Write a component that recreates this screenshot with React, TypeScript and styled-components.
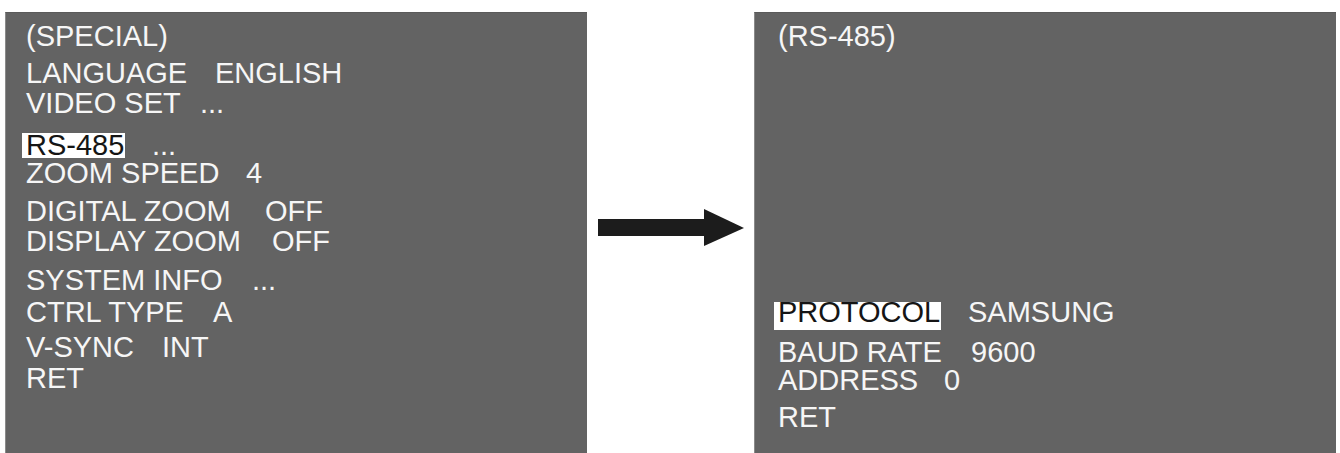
import styled, { createGlobalStyle } from 'styled-components'

const Global = createGlobalStyle`
  html, body {
    margin: 0;
    padding: 0;
    background: #fff;
  }
  body {
    font-family: "Liberation Sans", Arial, sans-serif;
  }
`

const Page = styled.div`
  display: flex;
  height: 453px;
  padding: 12px 4px 0 5px;
  box-sizing: border-box;
  overflow: hidden;
`

const Screen = styled.section<{ $padLeft: number }>`
  width: 582px;
  height: 441px;
  flex-shrink: 0;
  box-sizing: border-box;
  padding: 9px 0 0 ${p => p.$padLeft}px;
  background: #636363;
  border-left: 1px solid #8a8a8a;
  border-top: 1px solid #5a5a5a;
  color: #f6f6f6;
  font-size: 29px;
  display: flex;
  flex-direction: column;
`

const Row = styled.div<{ $mt?: number }>`
  display: flex;
  height: 28px;
  line-height: 28px;
  margin-top: ${p => p.$mt ?? 0}px;
  white-space: nowrap;
`

const Label = styled.span<{ $w?: number }>`
  flex-shrink: 0;
  width: ${p => (p.$w ? `${p.$w}px` : 'auto')};
`

const Value = styled.span``

const Mark = styled.span<{ $lh: number; $pb: number }>`
  display: inline-block;
  background: #fff;
  color: #151515;
  line-height: ${p => p.$lh}px;
  padding: 0 1px ${p => p.$pb}px 4px;
  margin-left: -4px;
`

const Between = styled.div`
  flex: 1;
  display: flex;
  align-items: center;
  justify-content: center;
  padding-bottom: 11px;
`

function Arrow() {
  return (
    <svg width="146" height="37" viewBox="0 0 146 37">
      <rect x="0" y="10" width="108" height="17" fill="#1c1c1c" />
      <polygon points="106,0 146,19 106,37" fill="#1c1c1c" />
    </svg>
  )
}

type Item = { label: string; value?: string; w?: number; mt: number; mark?: boolean }

const special: Item[] = [
  { label: '(SPECIAL)', mt: 0 },
  { label: 'LANGUAGE', value: 'ENGLISH', w: 189, mt: 9 },
  { label: 'VIDEO SET', value: '...', w: 174, mt: 2 },
  { label: 'RS-485', value: '...', w: 126, mt: 14, mark: true },
  { label: 'ZOOM SPEED', value: '4', w: 220, mt: 0 },
  { label: 'DIGITAL ZOOM', value: 'OFF', w: 239, mt: 10 },
  { label: 'DISPLAY ZOOM', value: 'OFF', w: 246, mt: 2 },
  { label: 'SYSTEM INFO', value: '...', w: 226, mt: 11 },
  { label: 'CTRL TYPE', value: 'A', w: 187, mt: 4 },
  { label: 'V-SYNC', value: 'INT', w: 136, mt: 7 },
  { label: 'RET', mt: 3 },
]

const rs485: Item[] = [
  { label: '(RS-485)', mt: 0 },
  { label: 'PROTOCOL', value: 'SAMSUNG', w: 190, mt: 248, mark: true },
  { label: 'BAUD RATE', value: '9600', w: 193, mt: 12 },
  { label: 'ADDRESS', value: '0', w: 166, mt: 0 },
  { label: 'RET', mt: 9 },
]

function Menu({ items, markLh, markPb }: { items: Item[]; markLh: number; markPb: number }) {
  return (
    <>
      {items.map(it => (
        <Row key={it.label} $mt={it.mt}>
          <Label $w={it.w}>
            {it.mark ? <Mark $lh={markLh} $pb={markPb}>{it.label}</Mark> : it.label}
          </Label>
          {it.value && <Value>{it.value}</Value>}
        </Row>
      ))}
    </>
  )
}

export default function App() {
  return (
    <>
      <Global />
      <Page>
        <Screen $padLeft={20}>
          <Menu items={special} markLh={24} markPb={1} />
        </Screen>
        <Between>
          <Arrow />
        </Between>
        <Screen $padLeft={23}>
          <Menu items={rs485} markLh={20} markPb={8} />
        </Screen>
      </Page>
    </>
  )
}
